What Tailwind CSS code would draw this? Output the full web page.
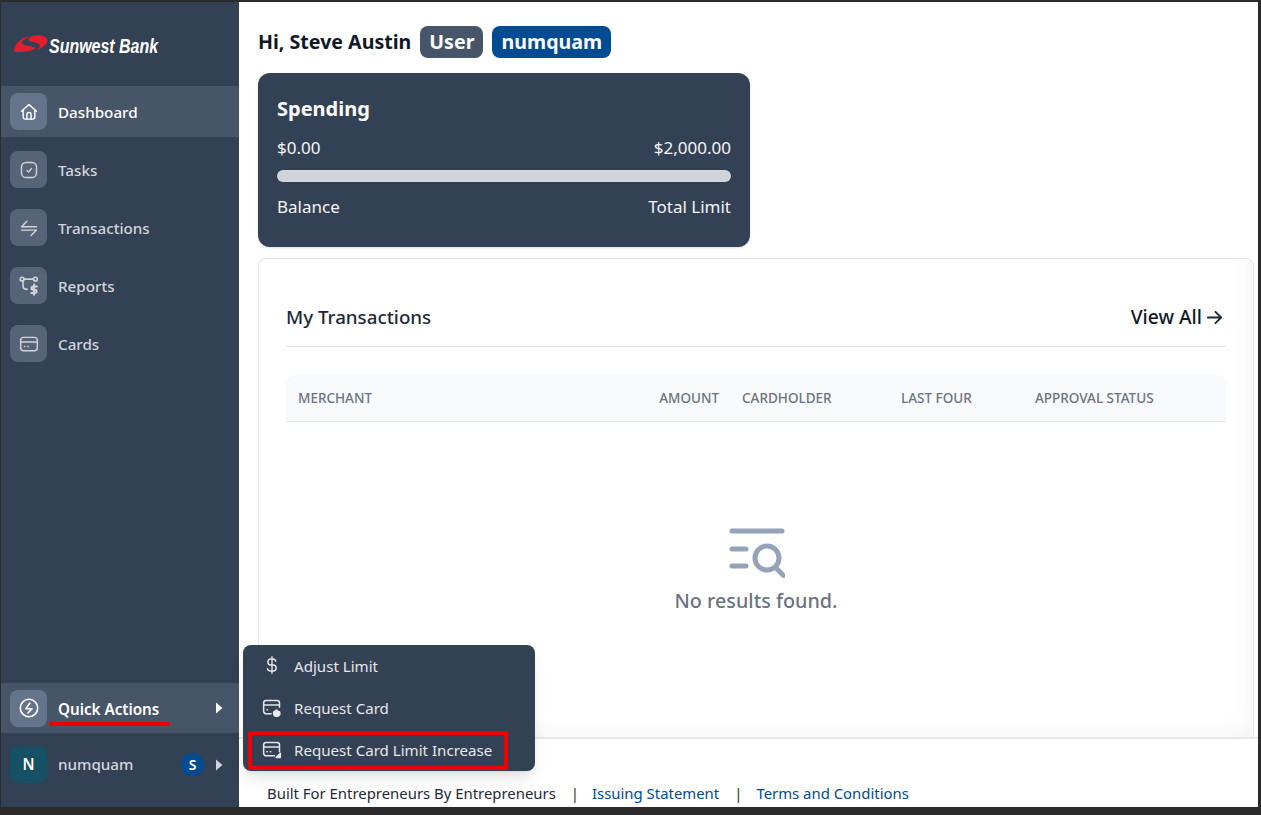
<!DOCTYPE html>
<html lang="en">
<head>
<meta charset="utf-8">
<title>Sunwest Bank</title>
<script src="https://cdn.jsdelivr.net/npm/@tailwindcss/browser@4"></script>
</head>
<body class="bg-[#2b2b2b] font-['Noto_Sans','Open_Sans',sans-serif]">
<div class="relative flex h-[815px] w-[1261px] overflow-hidden bg-[#2b2b2b] pt-[2px] pb-[8px] pl-px pr-[3px]">
  <aside class="flex w-[238px] shrink-0 flex-col bg-[#334155] text-[15.2px] font-medium text-[#d1d5db]">
    <div class="flex h-[84px] items-center pl-[11px]">
      <svg class="-mt-[2px] h-[22px] w-[36px] shrink-0" viewBox="4 4 36 22"><path fill="#e11d2e" d="M6 22C8 14 14 9 22 8.500C17 11 13 13 14 15.500C16 18 24 18 28 20C24 23 18 24 12 24C8 24 6 24 6 22Z"/><path fill="#e11d2e" d="M24 8C30 6.500 38 7.500 39.500 12C40 16 34 20 29 22.500C32 19 33 17 30 15.500C27 14 21 14 20.500 12C20.500 10 22 9 24 8Z"/></svg>
      <span class="ml-[1px] mt-[4px] inline-block origin-left scale-x-[0.76] font-['Liberation_Sans',sans-serif] text-[21px] font-bold italic text-white">Sunwest Bank</span>
    </div>

    <a class="flex h-[51px] items-center bg-[#475569] pl-[9px] text-white">
      <span class="flex size-[37px] items-center justify-center rounded-lg bg-[#64748b]">
        <svg class="size-[20px]" fill="none" stroke="currentColor" stroke-width="1.700" stroke-linecap="round" stroke-linejoin="round" viewBox="0 0 24 24"><path d="M3 11 12 3l9 8M5 9.500V18a2.500 2.500 0 0 0 2.500 2.500h9A2.500 2.500 0 0 0 19 18V9.500"/><path d="M9.500 20.500V15a2.500 2.500 0 0 1 5 0v5.500"/></svg>
      </span>
      <span class="ml-[11px] pt-[1px]">Dashboard</span>
    </a>
    <a class="mt-[14px] flex h-[37px] items-center pl-[9px]">
      <span class="flex size-[37px] items-center justify-center rounded-lg bg-[#566477]">
        <svg class="size-[20px]" fill="none" stroke="currentColor" stroke-width="1.700" stroke-linecap="round" stroke-linejoin="round" viewBox="0 0 24 24"><rect x="3" y="3" width="18" height="18" rx="5.500"/><path d="m9.500 12.500 2 1.800 3.500-4"/></svg>
      </span>
      <span class="ml-[11px] pt-[1px]">Tasks</span>
    </a>
    <a class="mt-[21px] flex h-[37px] items-center pl-[9px]">
      <span class="flex size-[37px] items-center justify-center rounded-lg bg-[#566477]">
        <svg class="size-[20px]" fill="none" stroke="currentColor" stroke-width="1.700" stroke-linecap="round" stroke-linejoin="round" viewBox="0 0 24 24"><path d="M3 10.500h18M3 10.500 9.500 4M21 14.500H3M21 14.500 14.500 21"/></svg>
      </span>
      <span class="ml-[11px] pt-[1px]">Transactions</span>
    </a>
    <a class="mt-[21px] flex h-[37px] items-center pl-[9px]">
      <span class="flex size-[37px] items-center justify-center rounded-lg bg-[#566477]">
        <svg class="size-[22px]" fill="none" stroke="currentColor" stroke-width="1.700" stroke-linecap="round" stroke-linejoin="round" viewBox="0 0 24 24"><circle cx="4.500" cy="4.500" r="2"/><circle cx="19" cy="4.500" r="2"/><path d="M6.500 4.500H17M5.500 6.500V12c0 2 1 3.500 3.500 3.500h1"/><path stroke-width="2.200" d="M20.500 12.500h-4a1.800 1.800 0 0 0 0 3.600h2a1.800 1.800 0 0 1 0 3.600h-4M17.500 10.500v11"/></svg>
      </span>
      <span class="ml-[11px] pt-[1px]">Reports</span>
    </a>
    <a class="mt-[21px] flex h-[37px] items-center pl-[9px]">
      <span class="flex size-[37px] items-center justify-center rounded-lg bg-[#566477]">
        <svg class="size-[20px]" fill="none" stroke="currentColor" stroke-width="1.700" stroke-linecap="round" stroke-linejoin="round" viewBox="0 0 24 24"><rect x="2" y="4" width="20" height="16" rx="3.500"/><path d="M2 9.500h20M6.500 15H7M10.500 15h.5"/></svg>
      </span>
      <span class="ml-[11px] pt-[1px]">Cards</span>
    </a>

    <a class="mt-auto flex h-[50px] items-center bg-[#475569] pl-[9px] pr-[16px] text-white">
      <span class="flex size-[37px] items-center justify-center rounded-lg bg-[#64748b]">
        <svg class="size-[22px]" fill="none" stroke="currentColor" stroke-width="1.700" stroke-linecap="round" stroke-linejoin="round" viewBox="0 0 24 24"><circle cx="12" cy="12" r="9.500"/><path d="M13 6.500 8.500 12.800h6.800L10.800 17.500"/></svg>
      </span>
      <span class="ml-[11px] flex-1 pt-[2px] font-semibold">Quick Actions</span>
      <svg class="h-[12px] w-[8px]" viewBox="0 0 8 12"><path fill="currentColor" d="M1 .5 7.500 6 1 11.500Z"/></svg>
    </a>
    <a class="mt-[13px] mb-[24px] flex h-[37px] items-center pl-[9px] pr-[16px]">
      <span class="flex size-[37px] items-center justify-center rounded-lg bg-[#155064] font-semibold text-white">N</span>
      <span class="ml-[11px] flex-1">numquam</span>
      <span class="mr-[11px] flex size-[23px] items-center justify-center rounded-full bg-[#004b91] text-[14px] font-semibold text-white">S</span>
      <svg class="h-[12px] w-[8px]" viewBox="0 0 8 12"><path fill="currentColor" d="M1 .5 7.500 6 1 11.500Z"/></svg>
    </a>
  </aside>

  <main class="relative flex min-w-0 flex-1 flex-col bg-white">
    <div class="flex-1 pl-[19px] pr-[4px] pt-[24px]">
      <div class="flex h-[32px] items-center">
        <h1 class="text-[19.6px] font-bold leading-[28px] text-[#111827]">Hi, Steve Austin</h1>
        <span class="ml-[9px] flex h-[32px] w-[63px] items-center justify-center rounded-lg bg-[#475569] text-[19.6px] font-bold text-white">User</span>
        <span class="ml-[9px] flex h-[32px] w-[119px] items-center justify-center rounded-lg bg-[#004b91] text-[19.6px] font-bold text-white">numquam</span>
      </div>
      <section class="mt-[15px] h-[174px] w-[492px] rounded-xl bg-[#334155] px-[19px] pt-[21px] text-white shadow-sm">
        <h2 class="text-[20px] font-bold leading-[30px]">Spending</h2>
        <div class="mt-[11px] flex justify-between text-[17px] leading-[26px] text-[#f3f4f6]"><span>$0.00</span><span>$2,000.00</span></div>
        <div class="mt-[9px] h-[12px] rounded-full bg-[#d1d5db]"></div>
        <div class="mt-[12px] flex justify-between text-[17px] leading-[26px] text-[#f3f4f6]"><span>Balance</span><span>Total Limit</span></div>
      </section>
      <section class="mt-[11px] h-[479px] rounded-t-lg border border-b-0 border-[#e5e7eb] px-[27px] shadow-[inset_-24px_-24px_30px_-30px_rgba(0,0,0,0.08)]">
        <div class="flex h-[88px] items-end justify-between border-b border-[#e5e7eb] pb-[15px]">
          <h2 class="text-[18.75px] font-medium leading-[28px] text-[#1f2937]">My Transactions</h2>
          <a class="flex items-center pr-[3px] text-[19.25px] font-medium leading-[28px] text-[#111827]">View All<svg class="ml-[4px] size-[17px] text-[#1f2937]" fill="none" stroke="currentColor" stroke-width="2" stroke-linecap="round" stroke-linejoin="round" viewBox="0 0 18 18"><path d="M2 9h14M10 3l6 6-6 6"/></svg></a>
        </div>
        <div class="mt-[28px] flex h-[47px] items-center rounded-t-lg border-b border-[#e5e7eb] bg-[#f9fafb] text-[13.5px] font-medium uppercase text-[#6b7280]">
          <span class="ml-[12px] w-[360px]">Merchant</span>
          <span class="w-[61px] text-right">Amount</span>
          <span class="ml-[23px] w-[159px]">Cardholder</span>
          <span class="w-[134px]">Last Four</span>
          <span>Approval Status</span>
        </div>
        <div class="flex flex-col items-center pt-[106px]">
          <svg class="ml-[1px] h-[50px] w-[56px]" fill="none" stroke="#94a3b8" stroke-width="5" stroke-linecap="round" viewBox="0 0 56 50"><path d="M3 3h50M3 21h14M3 38h14"/><circle cx="38" cy="30" r="12"/><path d="m47 40 7.500 7.500"/></svg>
          <p class="mt-[9px] text-[19.75px] font-medium leading-[28px] text-[#6b7280]">No results found.</p>
        </div>
      </section>
    </div>
    <footer class="flex h-[70px] items-start border-t-2 border-[#e5e7eb] pl-[28px] pt-[42px] text-[14.9px] leading-[24px]">
      <span class="text-[#1f2937]">Built For Entrepreneurs By Entrepreneurs</span>
      <span class="ml-[15px] text-[#1f2937]">|</span>
      <a class="ml-[13px] text-[#004b91]">Issuing Statement</a>
      <span class="ml-[15px] text-[#1f2937]">|</span>
      <a class="ml-[14px] text-[#004b91]">Terms and Conditions</a>
    </footer>
  </main>

  <div class="absolute left-[49px] top-[722px] h-[4px] w-[121px] rounded-full bg-[#f00000]"></div>

  <div class="absolute left-[243px] top-[645px] flex h-[126px] w-[292px] flex-col rounded-lg bg-[#334155] pl-[19px] text-[15.1px] text-[#e5e7eb] shadow-lg">
    <a class="flex h-[42px] items-center">
      <svg class="-mt-[3px] ml-[1px] mr-[13px] size-[18px]" fill="none" stroke="currentColor" stroke-width="1.800" stroke-linecap="round" stroke-linejoin="round" viewBox="0 0 24 24"><path d="M17 7a4 3.500 0 0 0-4-3h-2.500a4 4 0 0 0 0 8h3a4 4 0 0 1 0 8H10a4 4 0 0 1-4-3M12 1v22"/></svg>
      <span class="pt-[1px]">Adjust Limit</span>
    </a>
    <a class="flex h-[42px] items-center">
      <svg class="mr-[12px] size-[20px]" fill="none" stroke="currentColor" stroke-width="1.800" stroke-linecap="round" stroke-linejoin="round" viewBox="0 0 24 24"><path d="M11 19H5a3 3 0 0 1-3-3V6a3 3 0 0 1 3-3h13a3 3 0 0 1 3 3v5M2 8.500h19M6 14h.5"/><path fill="currentColor" d="M14 17.500c0-1 1-1.500 2-1.500.3-1 1-1.500 1.500-1.500s1 .7 1 1.500c1.500 0 3 .7 3 2.500a3.500 3.500 0 0 1-3.500 3.500h-1A3.500 3.500 0 0 1 14 18.500Z"/></svg>
      <span class="pt-[1px]">Request Card</span>
    </a>
    <a class="flex h-[42px] items-center">
      <svg class="mr-[12px] size-[20px]" fill="none" stroke="currentColor" stroke-width="1.800" stroke-linecap="round" stroke-linejoin="round" viewBox="0 0 24 24"><path d="M15 19H5a3 3 0 0 1-3-3V6a3 3 0 0 1 3-3h13a3 3 0 0 1 3 3v8M2 8.500h19M6 14h.5M10 14h.5"/><path fill="currentColor" d="m17 21 5-5v5Z"/></svg>
      <span class="pt-[1px]">Request Card Limit Increase</span>
    </a>
  </div>
  <div class="pointer-events-none absolute left-[248px] top-[731px] h-[39px] w-[260px] rounded-[2px] border-4 border-[#ee0008]"></div>
</div>
</body>
</html>
